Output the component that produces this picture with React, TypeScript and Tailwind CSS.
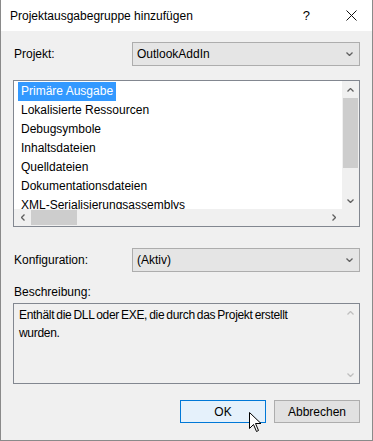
import React from "react";

const font = { fontFamily: '"Liberation Sans", "Noto Sans", sans-serif' };

function Chevron({ dir, color = "#606060" }: { dir: "up" | "down" | "left" | "right"; color?: string }) {
  const paths: Record<string, string> = {
    down: "M0.5 0.5 L3.5 3.5 L6.5 0.5",
    up: "M0.5 3.5 L3.5 0.5 L6.5 3.5",
    left: "M3.5 0.5 L0.5 3.5 L3.5 6.5",
    right: "M0.5 0.5 L3.5 3.5 L0.5 6.5",
  };
  const vertical = dir === "up" || dir === "down";
  return (
    <svg width={vertical ? 7 : 4} height={vertical ? 4 : 7} viewBox={vertical ? "0 0 7 4" : "0 0 4 7"}>
      <path d={paths[dir]} fill="none" stroke={color} strokeWidth="1.3" />
    </svg>
  );
}

function Combo({ value }: { value: string }) {
  return (
    <div className="flex h-[24px] w-[228px] items-center justify-between border border-[#adadad] bg-[#e5e5e5] pl-[4px] pr-[6px] text-[12px] text-black">
      <span className="leading-none">{value}</span>
      <Chevron dir="down" />
    </div>
  );
}

const items = [
  "Primäre Ausgabe",
  "Lokalisierte Ressourcen",
  "Debugsymbole",
  "Inhaltsdateien",
  "Quelldateien",
  "Dokumentationsdateien",
  "XML-Serialisierungsassemblys",
];

export default function App() {
  return (
    <div className="relative h-[441px] w-[373px] overflow-hidden border-x border-b border-[#8a8a8a] bg-[#f0f0f0] text-black" style={font}>
      {/* Title bar */}
      <div className="flex h-[31px] items-center bg-white pl-[9px] pr-[15px] text-[12px]">
        <span className="flex-1 pt-[1px]">Projektausgabegruppe hinzufügen</span>
        <span className="mr-[36px] text-[13px]">?</span>
        <svg width="11" height="11" viewBox="0 0 11 11">
          <path d="M0.5 0.5 L10.5 10.5 M10.5 0.5 L0.5 10.5" stroke="#111" strokeWidth="1" />
        </svg>
      </div>

      <div className="flex flex-col px-[12px]">
        {/* Projekt row */}
        <div className="mt-[11px] flex items-center">
          <span className="w-[119px] pl-[1px] text-[12px]">Projekt:</span>
          <Combo value="OutlookAddIn" />
        </div>

        {/* List box */}
        <div className="mt-[14px] flex h-[147px] w-[347px] flex-col border border-[#828790] bg-white">
          <div className="flex min-h-0 flex-1">
            <div className="flex-1 overflow-hidden pl-[4px] pt-[1px]">
              {items.map((it, i) => (
                <div key={it} className="flex h-[19px] items-center">
                  <span
                    className={
                      "whitespace-nowrap px-[3px] text-[12px] leading-[19px] " +
                      (i === 0 ? "bg-[#3399ff] text-white" : "text-black")
                    }
                  >
                    {it}
                  </span>
                </div>
              ))}
            </div>
            {/* vertical scrollbar */}
            <div className="flex w-[17px] flex-col bg-[#f0f0f0]">
              <div className="flex h-[17px] items-center justify-center">
                <Chevron dir="up" />
              </div>
              <div className="mx-[1px] h-[70px] bg-[#cdcdcd]" />
              <div className="flex-1" />
              <div className="flex h-[17px] items-center justify-center">
                <Chevron dir="down" />
              </div>
            </div>
          </div>
          {/* horizontal scrollbar */}
          <div className="flex h-[17px] bg-[#f0f0f0]">
            <div className="flex w-[17px] items-center justify-center">
              <Chevron dir="left" />
            </div>
            <div className="my-[1px] w-[46px] bg-[#cdcdcd]" />
            <div className="flex-1" />
            <div className="flex w-[17px] items-center justify-center">
              <Chevron dir="right" />
            </div>
            <div className="w-[17px]" />
          </div>
        </div>

        {/* Konfiguration row */}
        <div className="mt-[21px] flex items-center">
          <span className="w-[119px] pl-[1px] text-[12px]">Konfiguration:</span>
          <Combo value="(Aktiv)" />
        </div>

        <div className="mt-[12px] pl-[1px] text-[12px] leading-[16px]">Beschreibung:</div>

        {/* Description box */}
        <div className="mt-[3px] flex h-[81px] w-[347px] border border-[#828790] bg-[#f0f0f0]">
          <div className="flex-1 pl-[5px] pt-[2px] text-[12px] leading-[18px] tracking-[-0.3px] [word-spacing:-1px]">
            Enthält die DLL oder EXE, die durch das Projekt erstellt
            <br />
            wurden.
          </div>
          <div className="flex w-[17px] flex-col justify-between">
            <div className="flex h-[17px] items-center justify-center">
              <Chevron dir="up" color="#bfbfbf" />
            </div>
            <div className="flex h-[17px] items-center justify-center">
              <Chevron dir="down" color="#bfbfbf" />
            </div>
          </div>
        </div>

        {/* Buttons */}
        <div className="mt-[16px] flex w-[347px] justify-end gap-[8px]">
          <div className="relative flex h-[23px] w-[86px] items-center justify-center border border-[#0078d7] bg-[#e5f1fb] text-[12px]">
            OK
            <svg
              className="absolute left-[68px] top-[11px]"
              width="13"
              height="21"
              viewBox="0 0 13 21"
            >
              <path
                d="M0.5 0.5 L0.5 16.5 L4.5 12.5 L7.5 19.5 L9.5 18.5 L6.5 11.5 L12 11.5 Z"
                fill="white"
                stroke="black"
                strokeWidth="1"
                strokeLinejoin="miter"
              />
            </svg>
          </div>
          <div className="flex h-[23px] w-[86px] items-center justify-center border border-[#adadad] bg-[#e1e1e1] text-[12px]">
            Abbrechen
          </div>
        </div>
      </div>
    </div>
  );
}
